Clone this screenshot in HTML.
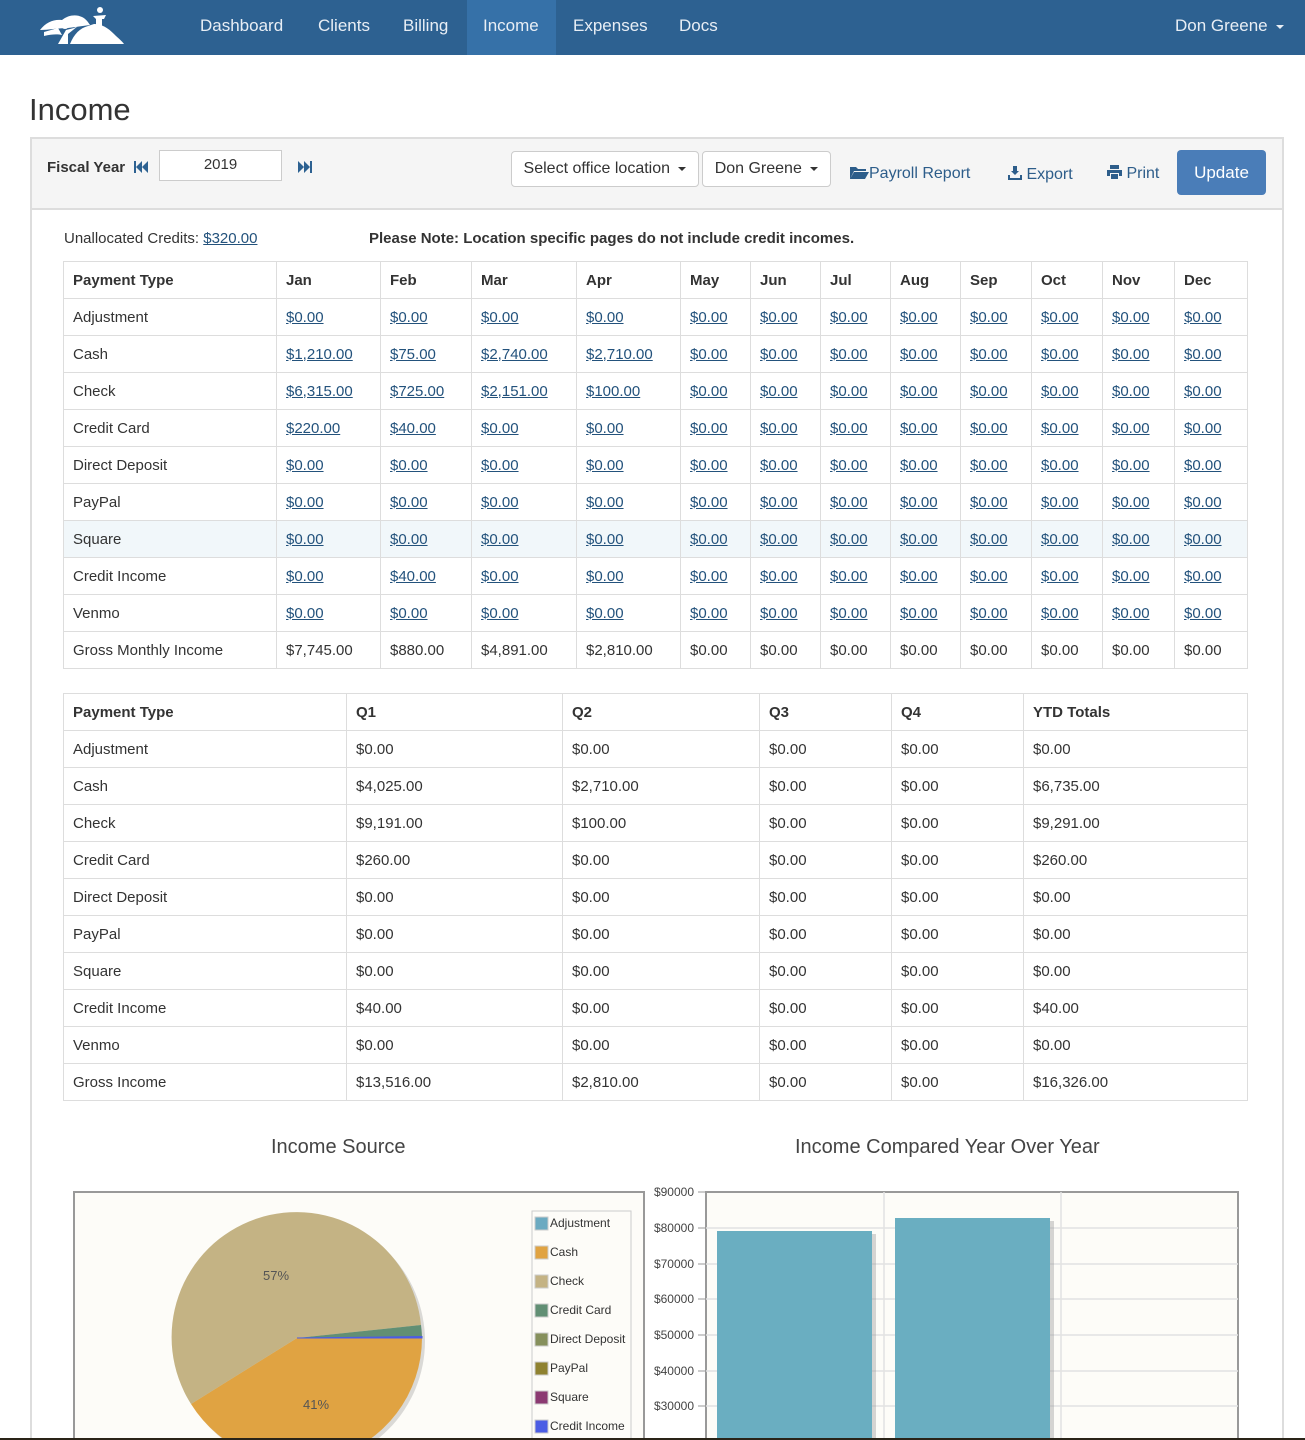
<!DOCTYPE html>
<html><head><meta charset="utf-8"><style>
*{box-sizing:border-box}
html,body{margin:0;width:1305px;height:1440px;overflow:hidden}
body{background:#fff;font-family:"Liberation Sans",sans-serif;color:#333;font-size:15px;position:relative}
.nav{position:absolute;left:0;top:0;width:1305px;height:55px;background:#2d6191}
.nav a{position:absolute;top:0;height:55px;line-height:52px;color:#e8eef5;font-size:17px;text-decoration:none}
.nav .act{background:#3671a8;}
h1{position:absolute;left:29px;top:92px;margin:0;font-weight:normal;font-size:31px;color:#333}
.panel{position:absolute;left:30px;top:137px;width:1254px;height:1303px;border:2px solid #ddd;border-bottom:none;overflow:hidden}
.ph{position:absolute;left:0;top:0;width:1250px;height:71px;background:#f5f5f5;border-bottom:2px solid #ddd}
.abs{position:absolute}
.btn{position:absolute;background:#fff;border:1px solid #ccc;border-radius:4px;height:36px;line-height:34px;font-size:16px;text-align:center;color:#333}
.car{display:inline-block;border-left:4px solid transparent;border-right:4px solid transparent;border-top:4px solid #333;vertical-align:middle;margin-left:4px}
.lnk{position:absolute;color:#2d5d8a;font-size:16px}
table{position:absolute;border-collapse:collapse;table-layout:fixed}
td,th{border:1px solid #ddd;height:37px;padding:0 9px;text-align:left;font-size:15px;white-space:nowrap}
th{font-weight:bold}
td a{color:#23527c;text-decoration:underline}
tr.hl td{background:#f1f7fa}
.t{position:absolute;font-size:20px;color:#444}
</style></head><body>
<div class="nav">
<svg class="abs" style="left:38px;top:6px" width="88" height="40" viewBox="0 0 88 40">
<path d="M2 24 C8 16 16 13 24 14 C30 9 38 8 44 11 C48 13 50 16 52 19 L30 22 C20 22 10 24 2 24Z" fill="#fff"/>
<path d="M6 30 C14 28 20 28 24 29 L20 22 L6 26Z" fill="#fff"/>
<circle cx="27" cy="19" r="4" fill="#fff"/>
<path d="M20 38 L28 24 L36 22 L40 20 L30 28 L30 38Z" fill="#fff"/>
<path d="M32 38 C36 28 42 22 50 20 L56 18 C64 18 70 22 76 28 C80 32 84 35 86 38Z" fill="#fff"/>
<circle cx="62" cy="4" r="3" fill="#fff"/>
<path d="M55 10 L68 9 L66 13 L64 13 L64 22 L58 22 L58 13 Z" fill="#fff"/>
</svg>
<a style="left:200px">Dashboard</a>
<a style="left:318px">Clients</a>
<a style="left:403px">Billing</a>
<a class="act" style="left:467px;width:89px;padding-left:16px">Income</a>
<a style="left:573px">Expenses</a>
<a style="left:679px">Docs</a>
<a style="left:1175px">Don Greene <span class="car" style="border-top-color:#e8eef5"></span></a>
</div>
<h1>Income</h1>
<div class="panel">
<div class="ph">
<div class="abs" style="left:15px;top:20px;font-weight:bold;font-size:15px">Fiscal Year</div>
<svg class="abs" style="left:102px;top:22px" width="14" height="12"><rect x="0" y="0" width="2" height="12" fill="#2d6191"/><path d="M8 0 L2 6 L8 12Z M14 0 L8 6 L14 12Z" fill="#2d6191"/></svg>
<div class="abs" style="left:127px;top:11px;width:123px;height:31px;background:#fff;border:1px solid #ccc;text-align:center;line-height:28px;font-size:15px">2019</div>
<svg class="abs" style="left:266px;top:22px" width="14" height="12"><path d="M0 0 L6 6 L0 12Z M6 0 L12 6 L6 12Z" fill="#2d6191"/><rect x="12" y="0" width="2" height="12" fill="#2d6191"/></svg>
<div class="btn" style="left:479px;top:12px;width:188px">Select office location <span class="car"></span></div>
<div class="btn" style="left:670px;top:12px;width:129px">Don Greene <span class="car"></span></div>
<div class="lnk" style="left:818px;top:26px"><svg width="19" height="14" style="vertical-align:-1px"><path d="M0 2 L6 2 L8 4 L16 4 L16 6 L4 6 L0 14Z M4 7 L19 7 L15 14 L0 14Z" fill="#2d5d8a"/></svg>Payroll Report</div>
<div class="lnk" style="left:976px;top:26px"><svg width="14" height="15" style="vertical-align:-1px"><path d="M0 10 L0 15 L14 15 L14 10 L12 10 L12 13 L2 13 L2 10Z M5 1 L9 1 L9 6 L11 6 L7 10 L3 6 L5 6Z" fill="#2d5d8a"/></svg> Export</div>
<div class="lnk" style="left:1075px;top:26px"><svg width="15" height="14" style="vertical-align:-1px"><path d="M3 0 L12 0 L12 4 L3 4Z M0 5 L15 5 L15 11 L12 11 L12 8 L3 8 L3 11 L0 11Z M4 9 L11 9 L11 14 L4 14Z" fill="#2d5d8a"/></svg> Print</div>
<div class="abs" style="left:1145px;top:11px;width:89px;height:45px;background:#4a7db8;border-radius:4px;color:#fff;font-size:17px;text-align:center;line-height:45px">Update</div>
</div>
<div class="abs" style="left:32px;top:91px;font-size:15px">Unallocated Credits: <a style="color:#23527c;text-decoration:underline">$320.00</a></div>
<div class="abs" style="left:337px;top:91px;font-size:15px;font-weight:bold">Please Note: Location specific pages do not include credit incomes.</div>
</div>

<table style="left:63px;top:261px;width:1184px">
<colgroup><col style="width:213px"><col style="width:104px"><col style="width:91px"><col style="width:105px"><col style="width:104px"><col style="width:70px"><col style="width:70px"><col style="width:70px"><col style="width:70px"><col style="width:71px"><col style="width:71px"><col style="width:72px"><col style="width:73px"></colgroup>
<tr><th>Payment Type</th><th>Jan</th><th>Feb</th><th>Mar</th><th>Apr</th><th>May</th><th>Jun</th><th>Jul</th><th>Aug</th><th>Sep</th><th>Oct</th><th>Nov</th><th>Dec</th></tr>
<tr><td>Adjustment</td><td><a>$0.00</a></td><td><a>$0.00</a></td><td><a>$0.00</a></td><td><a>$0.00</a></td><td><a>$0.00</a></td><td><a>$0.00</a></td><td><a>$0.00</a></td><td><a>$0.00</a></td><td><a>$0.00</a></td><td><a>$0.00</a></td><td><a>$0.00</a></td><td><a>$0.00</a></td></tr>
<tr><td>Cash</td><td><a>$1,210.00</a></td><td><a>$75.00</a></td><td><a>$2,740.00</a></td><td><a>$2,710.00</a></td><td><a>$0.00</a></td><td><a>$0.00</a></td><td><a>$0.00</a></td><td><a>$0.00</a></td><td><a>$0.00</a></td><td><a>$0.00</a></td><td><a>$0.00</a></td><td><a>$0.00</a></td></tr>
<tr><td>Check</td><td><a>$6,315.00</a></td><td><a>$725.00</a></td><td><a>$2,151.00</a></td><td><a>$100.00</a></td><td><a>$0.00</a></td><td><a>$0.00</a></td><td><a>$0.00</a></td><td><a>$0.00</a></td><td><a>$0.00</a></td><td><a>$0.00</a></td><td><a>$0.00</a></td><td><a>$0.00</a></td></tr>
<tr><td>Credit Card</td><td><a>$220.00</a></td><td><a>$40.00</a></td><td><a>$0.00</a></td><td><a>$0.00</a></td><td><a>$0.00</a></td><td><a>$0.00</a></td><td><a>$0.00</a></td><td><a>$0.00</a></td><td><a>$0.00</a></td><td><a>$0.00</a></td><td><a>$0.00</a></td><td><a>$0.00</a></td></tr>
<tr><td>Direct Deposit</td><td><a>$0.00</a></td><td><a>$0.00</a></td><td><a>$0.00</a></td><td><a>$0.00</a></td><td><a>$0.00</a></td><td><a>$0.00</a></td><td><a>$0.00</a></td><td><a>$0.00</a></td><td><a>$0.00</a></td><td><a>$0.00</a></td><td><a>$0.00</a></td><td><a>$0.00</a></td></tr>
<tr><td>PayPal</td><td><a>$0.00</a></td><td><a>$0.00</a></td><td><a>$0.00</a></td><td><a>$0.00</a></td><td><a>$0.00</a></td><td><a>$0.00</a></td><td><a>$0.00</a></td><td><a>$0.00</a></td><td><a>$0.00</a></td><td><a>$0.00</a></td><td><a>$0.00</a></td><td><a>$0.00</a></td></tr>
<tr class="hl"><td>Square</td><td><a>$0.00</a></td><td><a>$0.00</a></td><td><a>$0.00</a></td><td><a>$0.00</a></td><td><a>$0.00</a></td><td><a>$0.00</a></td><td><a>$0.00</a></td><td><a>$0.00</a></td><td><a>$0.00</a></td><td><a>$0.00</a></td><td><a>$0.00</a></td><td><a>$0.00</a></td></tr>
<tr><td>Credit Income</td><td><a>$0.00</a></td><td><a>$40.00</a></td><td><a>$0.00</a></td><td><a>$0.00</a></td><td><a>$0.00</a></td><td><a>$0.00</a></td><td><a>$0.00</a></td><td><a>$0.00</a></td><td><a>$0.00</a></td><td><a>$0.00</a></td><td><a>$0.00</a></td><td><a>$0.00</a></td></tr>
<tr><td>Venmo</td><td><a>$0.00</a></td><td><a>$0.00</a></td><td><a>$0.00</a></td><td><a>$0.00</a></td><td><a>$0.00</a></td><td><a>$0.00</a></td><td><a>$0.00</a></td><td><a>$0.00</a></td><td><a>$0.00</a></td><td><a>$0.00</a></td><td><a>$0.00</a></td><td><a>$0.00</a></td></tr>
<tr><td>Gross Monthly Income</td><td>$7,745.00</td><td>$880.00</td><td>$4,891.00</td><td>$2,810.00</td><td>$0.00</td><td>$0.00</td><td>$0.00</td><td>$0.00</td><td>$0.00</td><td>$0.00</td><td>$0.00</td><td>$0.00</td></tr>
</table>

<table style="left:63px;top:693px;width:1184px">
<colgroup><col style="width:283px"><col style="width:216px"><col style="width:197px"><col style="width:132px"><col style="width:132px"><col style="width:224px"></colgroup>
<tr><th>Payment Type</th><th>Q1</th><th>Q2</th><th>Q3</th><th>Q4</th><th>YTD Totals</th></tr>
<tr><td>Adjustment</td><td>$0.00</td><td>$0.00</td><td>$0.00</td><td>$0.00</td><td>$0.00</td></tr>
<tr><td>Cash</td><td>$4,025.00</td><td>$2,710.00</td><td>$0.00</td><td>$0.00</td><td>$6,735.00</td></tr>
<tr><td>Check</td><td>$9,191.00</td><td>$100.00</td><td>$0.00</td><td>$0.00</td><td>$9,291.00</td></tr>
<tr><td>Credit Card</td><td>$260.00</td><td>$0.00</td><td>$0.00</td><td>$0.00</td><td>$260.00</td></tr>
<tr><td>Direct Deposit</td><td>$0.00</td><td>$0.00</td><td>$0.00</td><td>$0.00</td><td>$0.00</td></tr>
<tr><td>PayPal</td><td>$0.00</td><td>$0.00</td><td>$0.00</td><td>$0.00</td><td>$0.00</td></tr>
<tr><td>Square</td><td>$0.00</td><td>$0.00</td><td>$0.00</td><td>$0.00</td><td>$0.00</td></tr>
<tr><td>Credit Income</td><td>$40.00</td><td>$0.00</td><td>$0.00</td><td>$0.00</td><td>$40.00</td></tr>
<tr><td>Venmo</td><td>$0.00</td><td>$0.00</td><td>$0.00</td><td>$0.00</td><td>$0.00</td></tr>
<tr><td>Gross Income</td><td>$13,516.00</td><td>$2,810.00</td><td>$0.00</td><td>$0.00</td><td>$16,326.00</td></tr>
</table>

<div class="t" style="left:271px;top:1136px">Income Source</div>
<div class="t" style="left:795px;top:1136px">Income Compared Year Over Year</div>

<svg class="abs" style="left:0;top:1180px" width="1305" height="260" viewBox="0 1180 1305 260" font-family="Liberation Sans, sans-serif">
<rect x="74" y="1192" width="570" height="260" fill="#fdfcf8" stroke="#999" stroke-width="2"/>
<g transform="translate(300,1341)"><ellipse cx="0" cy="0" rx="125" ry="125" fill="#999" opacity=".35"/></g>
<g transform="translate(297,1338)">
<path d="M0 0 L125 0 A125 125 0 0 1 -106 66 Z" fill="#e0a342"/>
<path d="M0 0 L-106 66 A125 125 0 1 1 124 -13 Z" fill="#c4b384"/>
<path d="M0 0 L124 -13 A125 125 0 0 1 125 -1.5 Z" fill="#618f74"/>
<path d="M0 0 L125 -1.5 L125 0 Z" fill="#4b5de4" stroke="#4b5de4"/>
</g>
<text x="263" y="1280" font-size="13" fill="#555">57%</text>
<text x="303" y="1409" font-size="13" fill="#555">41%</text>
<rect x="532" y="1211" width="99" height="240" fill="#fdfcf8" stroke="#ccc"/>
<g font-size="12" fill="#333">
<rect x="535" y="1217" width="13" height="13" fill="#6baac1" stroke="#ccc"/><text x="550" y="1227">Adjustment</text>
<rect x="535" y="1246" width="13" height="13" fill="#e0a342" stroke="#ccc"/><text x="550" y="1256">Cash</text>
<rect x="535" y="1275" width="13" height="13" fill="#c4b384" stroke="#ccc"/><text x="550" y="1285">Check</text>
<rect x="535" y="1304" width="13" height="13" fill="#618f74" stroke="#ccc"/><text x="550" y="1314">Credit Card</text>
<rect x="535" y="1333" width="13" height="13" fill="#86905c" stroke="#ccc"/><text x="550" y="1343">Direct Deposit</text>
<rect x="535" y="1362" width="13" height="13" fill="#8f8230" stroke="#ccc"/><text x="550" y="1372">PayPal</text>
<rect x="535" y="1391" width="13" height="13" fill="#8b3a72" stroke="#ccc"/><text x="550" y="1401">Square</text>
<rect x="535" y="1420" width="13" height="13" fill="#4b5de4" stroke="#ccc"/><text x="550" y="1430">Credit Income</text>
</g>
<rect x="706" y="1192" width="532" height="260" fill="#fdfcf8" stroke="#999" stroke-width="2"/>
<g stroke="#e2e2e2" stroke-width="1.5">
<line x1="706" y1="1228" x2="1238" y2="1228"/><line x1="706" y1="1264" x2="1238" y2="1264"/><line x1="706" y1="1299" x2="1238" y2="1299"/><line x1="706" y1="1335" x2="1238" y2="1335"/><line x1="706" y1="1371" x2="1238" y2="1371"/><line x1="706" y1="1406" x2="1238" y2="1406"/>
<line x1="884" y1="1192" x2="884" y2="1440"/><line x1="1061" y1="1192" x2="1061" y2="1440"/>
</g>
<rect x="721" y="1234" width="155" height="210" fill="#999" opacity=".4"/>
<rect x="717" y="1231" width="155" height="210" fill="#6aaec1"/>
<rect x="899" y="1221" width="155" height="220" fill="#999" opacity=".4"/>
<rect x="895" y="1218" width="155" height="223" fill="#6aaec1"/>
<g font-size="12" fill="#444" text-anchor="end">
<text x="694" y="1196">$90000</text><text x="694" y="1232">$80000</text><text x="694" y="1268">$70000</text><text x="694" y="1303">$60000</text><text x="694" y="1339">$50000</text><text x="694" y="1375">$40000</text><text x="694" y="1410">$30000</text>
</g>
<g stroke="#999"><line x1="698" y1="1192" x2="706" y2="1192"/><line x1="698" y1="1228" x2="706" y2="1228"/><line x1="698" y1="1264" x2="706" y2="1264"/><line x1="698" y1="1299" x2="706" y2="1299"/><line x1="698" y1="1335" x2="706" y2="1335"/><line x1="698" y1="1371" x2="706" y2="1371"/><line x1="698" y1="1406" x2="706" y2="1406"/></g>
<rect x="0" y="1438" width="1305" height="2" fill="#2a2418"/>
</svg>
</body></html>
